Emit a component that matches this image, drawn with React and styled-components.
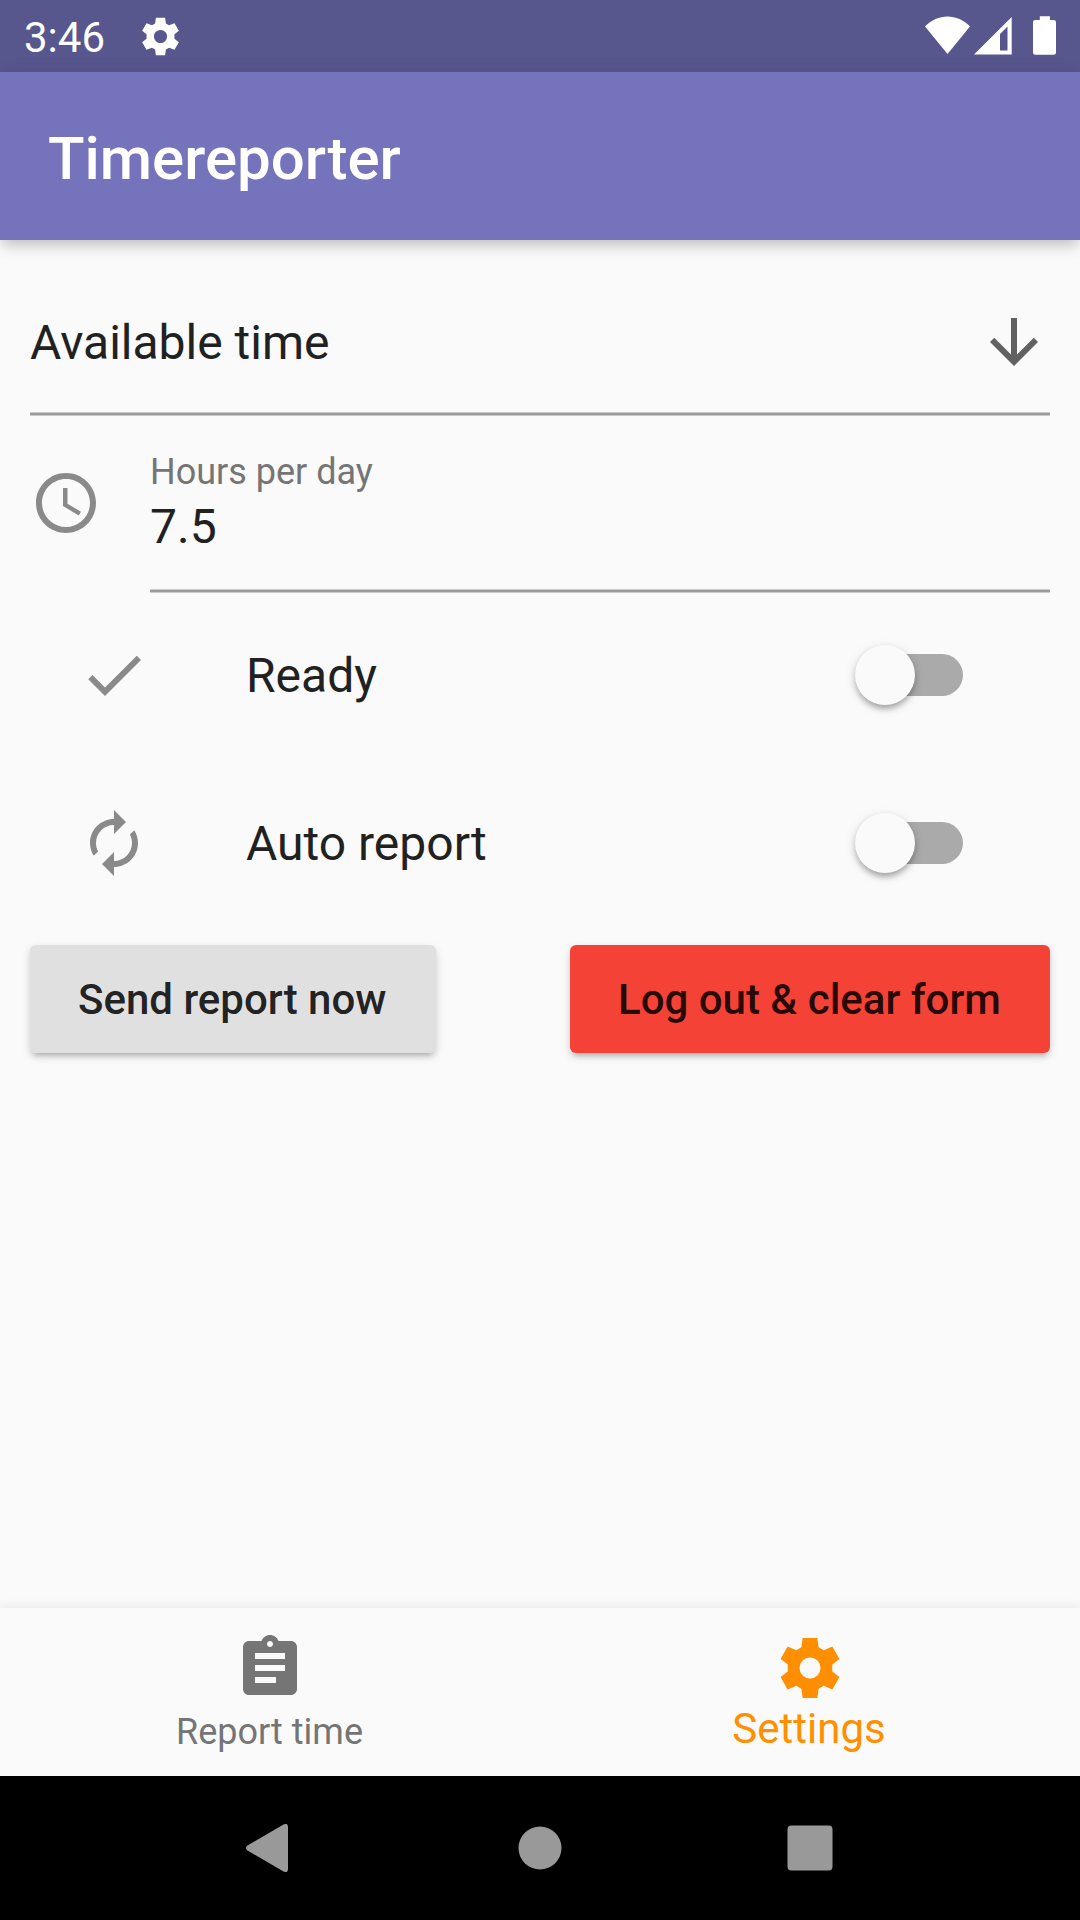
import React, { useState } from "react";
import styled, { createGlobalStyle } from "styled-components";

const GlobalStyle = createGlobalStyle`
  * { box-sizing: border-box; }
  body { margin: 0; background: #fafafa; }
  button { font: inherit; border: 0; margin: 0; padding: 0; background: none; }
`;

const Screen = styled.div`
  width: 1080px;
  height: 1920px;
  display: flex;
  flex-direction: column;
  overflow: hidden;
  background: #fafafa;
  color: #212121;
  font-family: Roboto, sans-serif;
  font-size: 48px;
  line-height: 57px;
`;

const StatusBar = styled.header`
  flex: none;
  height: 72px;
  display: flex;
  align-items: center;
  padding: 0 24px;
  background: #57568d;
  color: #fff;
`;

const Clock = styled.span`
  width: 113.5px;
  padding-top: 3px;
  font-size: 42px;
  line-height: 49px;
`;

const StatusIcons = styled.div`
  margin-left: auto;
  display: flex;
  align-items: center;
`;

const AppBar = styled.div`
  flex: none;
  height: 168px;
  display: flex;
  align-items: center;
  padding: 5px 48px 0;
  background: #7473bc;
  box-shadow: 0 6px 12px -3px rgba(0, 0, 0, 0.18), 0 10px 14px rgba(0, 0, 0, 0.05),
    0 3px 24px rgba(0, 0, 0, 0.05);
`;

const Title = styled.h1`
  margin: 0;
  font-size: 60px;
  font-weight: 500;
  line-height: 71px;
  color: #fff;
`;

const Form = styled.main`
  flex: 1;
  display: flex;
  flex-direction: column;
  padding: 30px 30px 0;
`;

const Rule = styled.div`
  flex: none;
  height: 4px;
  background: linear-gradient(#cacaca 1px, #9b9b9b 1px 3px, #cacaca 3px);
`;

const SelectRow = styled.div`
  height: 142px;
  display: flex;
  align-items: center;
  justify-content: space-between;
  padding-top: 2px;
`;

const SelectText = styled.span`
  padding-top: 1px;
`;

const Field = styled.div`
  height: 177px;
  margin-bottom: -2px;
  display: flex;
`;

const FieldIcon = styled.div`
  width: 120px;
  padding-top: 51px;
`;

const FieldBody = styled.div`
  flex: 1;
  display: flex;
  flex-direction: column;
  padding-top: 35px;
`;

const FieldLabel = styled.label`
  font-size: 36px;
  line-height: 42px;
  color: #757575;
`;

const FieldValue = styled.div`
  flex: 1;
  padding-top: 5px;
`;

const SwitchRow = styled.div`
  height: 168px;
  display: flex;
  align-items: center;
  padding: 0 87px 0 48px;
`;

const SwitchLabel = styled.span`
  flex: 1;
  margin-left: 96px;
  padding-top: 1px;
`;

const Track = styled.button`
  && {
    width: 99px;
    height: 42px;
    border-radius: 21px;
    display: flex;
    align-items: center;
    justify-content: ${(p) => (p.$on ? "flex-end" : "flex-start")};
    background: ${(p) => (p.$on ? "#ffc780" : "#aaaaaa")};
  }
`;

const Thumb = styled.span`
  flex: none;
  width: 60px;
  height: 60px;
  border-radius: 50%;
  margin: 0 -9px;
  background: ${(p) => (p.$on ? "#ff8f00" : "#fafafa")};
  box-shadow: 0 6px 6px -3px rgba(0, 0, 0, 0.2), 0 3px 6px rgba(0, 0, 0, 0.14),
    0 3px 12px rgba(0, 0, 0, 0.12);
`;

const Actions = styled.div`
  display: flex;
  justify-content: space-between;
  padding-top: 18px;
`;

const ActionButton = styled.button`
  && {
    width: ${(p) => p.$width}px;
    height: 108px;
    padding: 1px 0 0 48px;
    border-radius: 6px;
    background: ${(p) => (p.$danger ? "#f44336" : "#e0e0e0")};
    color: rgba(0, 0, 0, 0.87);
    font-size: 42px;
    font-weight: 500;
    line-height: 49px;
    text-align: left;
    white-space: nowrap;
    box-shadow: 0 7px 4px -5px rgba(0, 0, 0, 0.15), 0 4px 6px rgba(0, 0, 0, 0.12),
      0 3px 12px rgba(0, 0, 0, 0.08);
  }
`;

const Tabs = styled.nav`
  flex: none;
  height: 168px;
  display: flex;
  background: #fafafa;
  box-shadow: 0 -2px 9px rgba(0, 0, 0, 0.08);
`;

const Tab = styled.button`
  && {
    flex: 1;
    height: 168px;
    display: flex;
    flex-direction: column;
    align-items: center;
    padding-top: 24px;
    color: ${(p) => (p.$active ? "#ff8f00" : "#757575")};
    font-size: ${(p) => (p.$active ? 42 : 36)}px;
    line-height: 50px;
  }
`;

const TabLabel = styled.span`
  margin-top: ${(p) => (p.$active ? 0 : 3)}px;
  margin-right: ${(p) => (p.$active ? 2 : 1)}px;
`;

const SystemBar = styled.footer`
  flex: none;
  height: 144px;
  display: grid;
  grid-template-columns: repeat(3, 270px);
  justify-content: center;
  align-items: center;
  justify-items: center;
  background: #000;
  color: #999;
`;

const Svg = styled.svg`
  display: block;
  flex: none;
  fill: currentColor;
  color: ${(p) => p.$color || "inherit"};
`;

const Glyph = ({ d, size = 72, color }) => (
  <Svg width={size} height={size} viewBox="0 0 24 24" $color={color}>
    <path fillRule="evenodd" d={d} />
  </Svg>
);

const gear =
  "M9.55 2h4.9l.42 3.07 1.69.98 2.9-1.18 2.34 4.1-2.37 1.88v2.3l2.37 1.88-2.34 4.1-2.9-1.18-1.69.98L14.45 22h-4.9l-.42-3.07-1.69-.98-2.9 1.18-2.34-4.1 2.37-1.88v-2.3L2.2 8.97l2.34-4.1 2.9 1.18 1.69-.98zM12 8.5a3.5 3.5 0 1 0 0 7 3.5 3.5 0 0 0 0-7z";
const arrowDown =
  "M20 12l-1.41-1.41L13 16.17V4h-2v12.17l-5.58-5.59L4 12l8 8 8-8z";
const clock =
  "M11.99 2C6.47 2 2 6.48 2 12s4.47 10 9.99 10C17.52 22 22 17.52 22 12S17.52 2 11.99 2zM12 20c-4.42 0-8-3.58-8-8s3.58-8 8-8 8 3.58 8 8-3.58 8-8 8zM12.5 7H11v6l5.25 3.15.75-1.23-4.5-2.67z";
const check = "M9 16.17L4.83 12l-1.42 1.41L9 19 21 7l-1.41-1.41z";
const autorenew =
  "M12 6v3l4-4-4-4v3c-4.42 0-8 3.58-8 8 0 1.57.46 3.03 1.24 4.26L6.7 14.8c-.45-.83-.7-1.79-.7-2.8 0-3.31 2.69-6 6-6zm6.76 1.74L17.3 9.2c.44.84.7 1.79.7 2.8 0 3.31-2.69 6-6 6v-3l-4 4 4 4v-3c4.42 0 8-3.58 8-8 0-1.57-.46-3.03-1.24-4.26z";
const clipboard =
  "M19 3h-4.18C14.4 1.84 13.3 1 12 1c-1.3 0-2.4.84-2.82 2H5c-1.1 0-2 .9-2 2v14c0 1.1.9 2 2 2h14c1.1 0 2-.9 2-2V5c0-1.1-.9-2-2-2zm-7 0c.55 0 1 .45 1 1s-.45 1-1 1-1-.45-1-1 .45-1 1-1zm2 14H7v-2h7v2zm3-4H7v-2h10v2zm0-4H7V7h10v2z";

const SystemIcons = () => (
  <StatusIcons>
    <Svg width="131" height="40" viewBox="0 0 131 40" aria-label="Wi-Fi, signal, battery">
      <path d="M0 10.5C6 4 14.5 .5 22.5 .5S39 4 45 10.5L22.5 38z" />
      <path fillRule="evenodd" d="M86.7 1v37.500H49zM82.5 10.500L75 18V34.500h7.500z" />
      <path d="M125 .2V4h3.700a2.300 2.300 0 0 1 2.300 2.300v30.200a2.300 2.300 0 0 1-2.300 2.300h-18.400a2.300 2.300 0 0 1-2.300-2.300V6.300a2.300 2.300 0 0 1 2.300-2.300h4.500V.2z" />
    </Svg>
  </StatusIcons>
);

function SwitchItem({ icon, label }) {
  const [on, setOn] = useState(false);
  return (
    <SwitchRow>
      <Glyph d={icon} color="#8a8a8a" />
      <SwitchLabel>{label}</SwitchLabel>
      <Track $on={on} role="switch" aria-checked={on} aria-label={label} onClick={() => setOn(!on)}>
        <Thumb $on={on} />
      </Track>
    </SwitchRow>
  );
}

export default function App() {
  return (
    <Screen>
      <GlobalStyle />
      <StatusBar>
        <Clock>3:46</Clock>
        <Glyph d={gear} size={45} />
        <SystemIcons />
      </StatusBar>
      <AppBar>
        <Title>Timereporter</Title>
      </AppBar>
      <Form>
        <SelectRow>
          <SelectText>Available time</SelectText>
          <Glyph d={arrowDown} color="#616161" />
        </SelectRow>
        <Rule />
        <Field>
          <FieldIcon>
            <Glyph d={clock} color="#8a8a8a" />
          </FieldIcon>
          <FieldBody>
            <FieldLabel>Hours per day</FieldLabel>
            <FieldValue>7.5</FieldValue>
            <Rule />
          </FieldBody>
        </Field>
        <SwitchItem icon={check} label="Ready" />
        <SwitchItem icon={autorenew} label="Auto report" />
        <Actions>
          <ActionButton $width={405.500}>Send report now</ActionButton>
          <ActionButton $width={480} $danger>
            Log out &amp; clear form
          </ActionButton>
        </Actions>
      </Form>
      <Tabs>
        <Tab>
          <Glyph d={clipboard} />
          <TabLabel>Report time</TabLabel>
        </Tab>
        <Tab $active>
          <Glyph d={gear} />
          <TabLabel $active>Settings</TabLabel>
        </Tab>
      </Tabs>
      <SystemBar>
        <Svg width="48" height="48" viewBox="0 0 48 48">
          <path d="M37.500 .500Q42 -1.500 42 3V45Q42 49.500 37.500 47.500L1.500 26.500Q-1.500 24 1.500 21.500z" />
        </Svg>
        <Svg width="44" height="44" viewBox="0 0 44 44">
          <circle cx="22" cy="22" r="21.500" />
        </Svg>
        <Svg width="46" height="46" viewBox="0 0 46 46">
          <rect x=".5" y=".5" width="45" height="45" rx="4" />
        </Svg>
      </SystemBar>
    </Screen>
  );
}
